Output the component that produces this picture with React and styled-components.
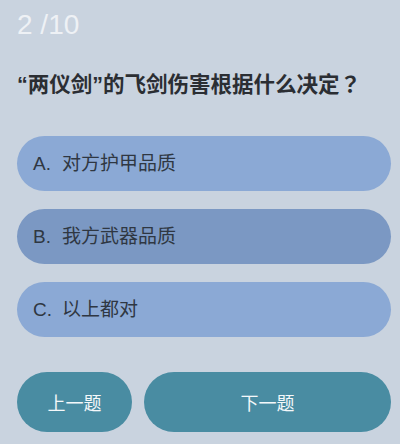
import styled, { createGlobalStyle } from "styled-components";

const GlobalStyle = createGlobalStyle`
  html, body {
    margin: 0;
    padding: 0;
    background: #c9d3df;
  }
  body {
    font-family: "Liberation Sans", "Noto Sans CJK SC", sans-serif;
  }
`;

const options = [
  { key: "A", text: "对方护甲品质" },
  { key: "B", text: "我方武器品质", selected: true },
  { key: "C", text: "以上都对" },
];

export default function App() {
  return (
    <>
      <GlobalStyle />
      <StPage>
        <StCounter>2 /10</StCounter>
        <StQuestion>
          “两仪剑”的飞剑伤害根据什么决定<StMark>？</StMark>
        </StQuestion>
        <StOptions>
          {options.map((o) => (
            <StOption key={o.key} $selected={o.selected}>
              <StLetter>{o.key}.</StLetter>
              {o.text}
            </StOption>
          ))}
        </StOptions>
        <StNav>
          <StNavButton $width="115px">上一题</StNavButton>
          <StNavButton $grow>下一题</StNavButton>
        </StNav>
      </StPage>
    </>
  );
}

const StPage = styled.main`
  display: flex;
  flex-direction: column;

  width: 400px;
  height: 444px;
  padding: 10px 9px 0 17px;
  box-sizing: border-box;
  background: #c9d3df;
`;

const StCounter = styled.div`
  font-size: 28px;
  line-height: 30px;
  color: #eef1f5;
`;

const StQuestion = styled.h1`
  margin: 28px 0 0;
  font-size: 21.5px;
  line-height: 30px;
  font-weight: bold;
  color: #2b2e33;
  font-family: "Liberation Sans", "Noto Sans CJK SC", sans-serif;
`;

const StMark = styled.span`
  font-family: "Noto Sans CJK TC", sans-serif;
`;

const StOptions = styled.div`
  display: flex;
  flex-direction: column;
  gap: 18px;

  margin-top: 36px;
`;

const StOption = styled.div`
  height: 55px;
  padding-left: 16px;
  border-radius: 28px;
  background: ${({ $selected }) => ($selected ? "#7b98c3" : "#8ba9d5")};
  font-size: 19px;
  line-height: 55px;
  color: #2f3742;
  white-space: nowrap;
`;

const StLetter = styled.span`
  display: inline-block;
  width: 29px;
`;

const StNav = styled.div`
  display: flex;
  gap: 12px;

  margin-top: 35px;
`;

const StNavButton = styled.button`
  flex: ${({ $grow }) => ($grow ? 1 : "none")};
  width: ${({ $width }) => $width || "auto"};
  height: 60px;
  border: none;
  border-radius: 30px;
  background: #498ca2;
  color: #f4f8fa;
  font-size: 18px;
  font-family: "Liberation Sans", "Noto Sans CJK SC", sans-serif;
`;
